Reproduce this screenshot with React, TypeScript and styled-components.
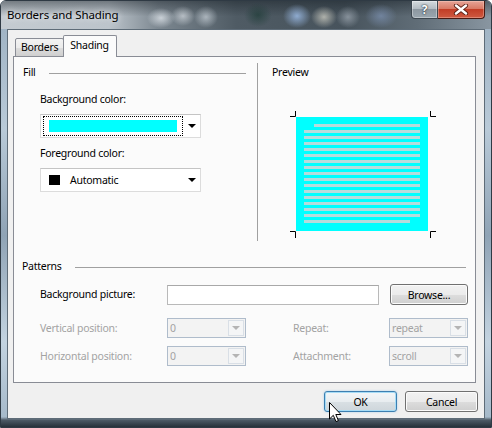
import React from "react";
import styled, { createGlobalStyle } from "styled-components";

const uiFont = `"Noto Sans", "Open Sans", "DejaVu Sans", sans-serif`;

const GlobalStyle = createGlobalStyle`
  html, body {
    margin: 0;
    padding: 0;
    background: #ffffff;
  }
  body {
    font-family: ${uiFont};
    font-size: 10.5px;
    letter-spacing: -0.25px;
    color: #000000;
  }
`;

const App = () => {
  return (
    <>
      <GlobalStyle />
      <Window>
        <TitleBar>
          <Title>Borders and Shading</Title>
          <CaptionButtons>
            <HelpButton>?</HelpButton>
            <CloseButton>
              <svg width="16" height="11" viewBox="0 0 16 11">
                <path
                  d="M3 1.5 L13 9.5 M13 1.5 L3 9.5"
                  stroke="#5a1f14"
                  strokeWidth="4.2"
                  strokeLinecap="round"
                />
                <path
                  d="M3 1.5 L13 9.5 M13 1.5 L3 9.5"
                  stroke="#ffffff"
                  strokeWidth="2.4"
                  strokeLinecap="round"
                />
              </svg>
            </CloseButton>
          </CaptionButtons>
        </TitleBar>

        <Client>
          <TabStrip>
            <Tab>Borders</Tab>
            <Tab $active>Shading</Tab>
          </TabStrip>

          <Panel>
            <TopSection>
              <FillColumn>
                <GroupHeading $indent={9} $end={11}>
                  <span>Fill</span>
                  <HeadingLine />
                </GroupHeading>
                <Field>
                  <FieldLabel $top={12}>Background color:</FieldLabel>
                  <ColorCombo>
                    <FocusRect $focused>
                      <Swatch $color="#00ffff" $w={128} $h={12} />
                    </FocusRect>
                    <DropArrow />
                  </ColorCombo>
                  <FieldLabel $top={8}>Foreground color:</FieldLabel>
                  <ColorCombo>
                    <FocusRect>
                      <Swatch $color="#000000" $w={11} $h={10} />
                      <ComboText>Automatic</ComboText>
                    </FocusRect>
                    <DropArrow />
                  </ColorCombo>
                </Field>
              </FillColumn>

              <Separator />

              <PreviewColumn>
                <HeadingText>Preview</HeadingText>
                <PreviewArt>
                  <svg width="146" height="127" viewBox="0 0 146 127">
                    <rect x="6" y="6" width="132" height="114" fill="#00ffff" />
                    {Array.from({ length: 17 }).map((_, i) => {
                      const first = i === 0;
                      const last = i === 16;
                      return (
                        <rect
                          key={i}
                          x={first ? 24 : 14}
                          y={13 + i * 6}
                          width={first || last ? 106 : 116}
                          height={3}
                          fill="#b6dcdc"
                        />
                      );
                    })}
                    <path
                      d="M0 5.5 H5.5 V0 M140.5 0 V5.5 H146 M0 120.5 H5.5 V127 M146 120.5 H140.5 V127"
                      stroke="#000"
                      strokeWidth="1"
                      fill="none"
                    />
                  </svg>
                </PreviewArt>
              </PreviewColumn>
            </TopSection>

            <PatternsSection>
              <GroupHeading $indent={8} $end={9}>
                <span>Patterns</span>
                <HeadingLine />
              </GroupHeading>

              <PatternRow $top={10}>
                <FieldLabel>Background picture:</FieldLabel>
                <TextBox />
                <BrowseCell>
                  <Button $w={78}>Browse...</Button>
                </BrowseCell>
              </PatternRow>

              <PatternRow $top={13}>
                <FieldLabel $disabled>Vertical position:</FieldLabel>
                <DisabledCombo>
                  <ComboValue>0</ComboValue>
                  <ComboButton>
                    <DropArrow $disabled />
                  </ComboButton>
                </DisabledCombo>
                <span />
                <FieldLabel $disabled>Repeat:</FieldLabel>
                <DisabledCombo>
                  <ComboValue>repeat</ComboValue>
                  <ComboButton>
                    <DropArrow $disabled />
                  </ComboButton>
                </DisabledCombo>
              </PatternRow>

              <PatternRow $top={8}>
                <FieldLabel $disabled>Horizontal position:</FieldLabel>
                <DisabledCombo>
                  <ComboValue>0</ComboValue>
                  <ComboButton>
                    <DropArrow $disabled />
                  </ComboButton>
                </DisabledCombo>
                <span />
                <FieldLabel $disabled>Attachment:</FieldLabel>
                <DisabledCombo>
                  <ComboValue>scroll</ComboValue>
                  <ComboButton>
                    <DropArrow $disabled />
                  </ComboButton>
                </DisabledCombo>
              </PatternRow>
            </PatternsSection>
          </Panel>

          <ButtonRow>
            <Button $w={73} $primary>
              OK
            </Button>
            <Button $w={73}>Cancel</Button>
          </ButtonRow>
        </Client>

        <Cursor>
          <svg width="13" height="21" viewBox="0 0 13 21">
            <path
              d="M0.5 0.5 L0.5 17 L4.3 13.3 L7 19.6 L9.4 18.6 L6.8 12.5 L12 12.5 Z"
              fill="#ffffff"
              stroke="#000000"
              strokeWidth="1"
              strokeLinejoin="round"
            />
          </svg>
        </Cursor>
      </Window>
    </>
  );
};

export default App;

const Window = styled.div`
  position: relative;
  width: 492px;
  height: 428px;
  box-sizing: border-box;
  display: flex;
  flex-direction: column;
  padding: 0 6px 8px 6px;
  border: 1px solid #2f3a44;
  border-radius: 6px 6px 0 0;
  background: linear-gradient(0deg, #27313a 0px, #4d5a66 7px, rgba(0, 0, 0, 0) 10px),
    linear-gradient(
      180deg,
      #9aaebf 0%,
      #b9cad8 30%,
      #8fa3b5 55%,
      #c3d3e0 80%,
      #a2b6c7 100%
    );
  overflow: hidden;
`;

const TitleBar = styled.div`
  height: 28px;
  margin: 0 -6px;
  padding: 0 6px;
  display: flex;
  align-items: flex-start;
  background: radial-gradient(ellipse 14px 10px at 160px 17px, rgba(235, 240, 245, 0.7), transparent),
    radial-gradient(ellipse 12px 10px at 182px 15px, rgba(230, 235, 240, 0.6), transparent),
    radial-gradient(ellipse 12px 11px at 205px 16px, rgba(220, 228, 235, 0.6), transparent),
    radial-gradient(ellipse 14px 12px at 257px 14px, rgba(30, 60, 55, 0.7), transparent),
    radial-gradient(ellipse 14px 12px at 296px 15px, rgba(150, 180, 220, 0.9), transparent),
    radial-gradient(ellipse 13px 11px at 323px 16px, rgba(200, 200, 190, 0.8), transparent),
    radial-gradient(ellipse 12px 11px at 347px 16px, rgba(150, 160, 170, 0.8), transparent),
    radial-gradient(ellipse 16px 12px at 380px 15px, rgba(120, 140, 170, 0.8), transparent),
    linear-gradient(180deg, rgba(20, 28, 34, 0.45) 0%, rgba(0, 0, 0, 0) 55%),
    linear-gradient(
      90deg,
      #c4cbd1 0%,
      #bcc4cb 22%,
      #7d8891 32%,
      #4f5b64 48%,
      #47535c 70%,
      #606d77 85%,
      #8996a1 100%
    );
`;

const Title = styled.div`
  padding-top: 6px;
  line-height: 16px;
  font-size: 11.5px;
  letter-spacing: -0.1px;
  text-shadow: 0 0 6px rgba(255, 255, 255, 0.9);
`;

const CaptionButtons = styled.div`
  display: flex;
  margin-left: auto;
`;

const HelpButton = styled.div`
  width: 27px;
  height: 18px;
  box-sizing: border-box;
  border: 1px solid #3d4750;
  border-top: none;
  border-radius: 0 0 0 4px;
  background: linear-gradient(
    180deg,
    #d4dade 0%,
    #b3bcc3 45%,
    #8d98a1 50%,
    #9aa6af 100%
  );
  box-shadow: inset 0 0 0 1px rgba(255, 255, 255, 0.35);
  color: #ffffff;
  font-weight: 700;
  font-size: 12px;
  line-height: 17px;
  text-align: center;
  text-shadow: 0 0 2px #1f2a33, 0 0 1px #1f2a33;
`;

const CloseButton = styled.div`
  width: 47px;
  height: 18px;
  box-sizing: border-box;
  border: 1px solid #4a1a12;
  border-left: none;
  border-top: none;
  border-radius: 0 0 4px 0;
  background: linear-gradient(
    180deg,
    #e6a497 0%,
    #d87a66 45%,
    #c23d26 50%,
    #cf5a41 100%
  );
  box-shadow: inset 0 0 0 1px rgba(255, 220, 210, 0.35);
  display: flex;
  align-items: center;
  justify-content: center;
`;

const Client = styled.div`
  flex: 1;
  box-sizing: border-box;
  border: 1px solid #5e6c78;
  background: #f0f0f0;
  padding: 6px 6px 0 5px;
  display: flex;
  flex-direction: column;
`;

const TabStrip = styled.div`
  display: flex;
  align-items: flex-end;
  height: 21px;
  margin-left: 2px;
  margin-bottom: -1px;
  position: relative;
  z-index: 1;
`;

const Tab = styled.div<{ $active?: boolean }>`
  box-sizing: border-box;
  height: ${(p) => (p.$active ? "22px" : "19px")};
  padding: ${(p) => (p.$active ? "2px 7px 0 6px" : "1px 5px 0 5px")};
  margin-right: ${(p) => (p.$active ? "0" : "-1px")};
  border: 1px solid #898c95;
  border-bottom: ${(p) => (p.$active ? "none" : "1px solid #898c95")};
  border-radius: 2px 2px 0 0;
  background: ${(p) =>
    p.$active
      ? "#fbfbfb"
      : "linear-gradient(180deg, #f3f3f3 0%, #ebebeb 50%, #dddddd 51%, #cfcfcf 100%)"};
  line-height: 15px;
`;

const Panel = styled.div`
  width: 463px;
  height: 327px;
  box-sizing: border-box;
  border: 1px solid #898c95;
  background: #fbfbfb;
  display: flex;
  flex-direction: column;
`;

const TopSection = styled.div`
  display: grid;
  grid-template-columns: 243px 1px 1fr;
  height: 184px;
`;

const FillColumn = styled.div`
  padding-top: 8px;
`;

const Separator = styled.div`
  background: #a0a0a0;
  margin-top: 6px;
`;

const PreviewColumn = styled.div`
  padding-top: 8px;
  padding-left: 14px;
`;

const HeadingText = styled.div`
  line-height: 15px;
`;

const GroupHeading = styled.div<{ $indent: number; $end: number }>`
  display: flex;
  align-items: center;
  gap: 13px;
  height: 15px;
  line-height: 15px;
  padding-left: ${(p) => p.$indent}px;
  padding-right: ${(p) => p.$end}px;
`;

const HeadingLine = styled.div`
  flex: 1;
  height: 1px;
  margin-top: 1px;
  background: #a0a0a0;
`;

const Field = styled.div`
  padding-left: 26px;
`;

const FieldLabel = styled.div<{ $top?: number; $disabled?: boolean }>`
  line-height: 15px;
  margin-top: ${(p) => p.$top ?? 0}px;
  color: ${(p) => (p.$disabled ? "#a3a3a3" : "#000000")};
  white-space: nowrap;
`;

const ColorCombo = styled.div`
  width: 161px;
  height: 24px;
  margin-top: 7px;
  box-sizing: border-box;
  border: 1px solid #dcdcdc;
  border-top-color: #c4c4c4;
  background: #ffffff;
  display: flex;
  align-items: center;
  padding: 0 4px 0 2px;
`;

const FocusRect = styled.div<{ $focused?: boolean }>`
  width: 140px;
  height: 20px;
  box-sizing: border-box;
  border: 1px dotted ${(p) => (p.$focused ? "#000000" : "transparent")};
  display: flex;
  align-items: center;
  padding-left: 5px;
`;

const Swatch = styled.div<{ $color: string; $w: number; $h: number }>`
  width: ${(p) => p.$w}px;
  height: ${(p) => p.$h}px;
  background: ${(p) => p.$color};
  flex-shrink: 0;
`;

const ComboText = styled.span`
  margin-left: 10px;
  line-height: 15px;
`;

const DropArrow = styled.div<{ $disabled?: boolean }>`
  margin-left: auto;
  width: 0;
  height: 0;
  border-left: 4px solid transparent;
  border-right: 4px solid transparent;
  border-top: 4px solid ${(p) => (p.$disabled ? "#b4b4b4" : "#000000")};
  margin-right: ${(p) => (p.$disabled ? "auto" : "0")};
`;

const PreviewArt = styled.div`
  margin-top: 31px;
  margin-left: 18px;
  line-height: 0;
`;

const PatternsSection = styled.div`
  margin-top: 18px;
`;

const PatternRow = styled.div<{ $top: number }>`
  display: grid;
  grid-template-columns: 127px 79px 47px 96px 79px;
  align-items: center;
  padding-left: 26px;
  margin-top: ${(p) => p.$top}px;
`;

const TextBox = styled.div`
  grid-column: 2 / span 3;
  width: 212px;
  height: 20px;
  box-sizing: border-box;
  border: 1px solid #b9b9b9;
  border-top-color: #a8a8a8;
  background: #ffffff;
`;

const BrowseCell = styled.div`
  padding-left: 1px;
`;

const Button = styled.button<{ $w: number; $primary?: boolean }>`
  width: ${(p) => p.$w}px;
  height: 21px;
  box-sizing: border-box;
  padding: 0;
  font-family: ${uiFont};
  font-size: 10.5px;
  letter-spacing: -0.25px;
  color: #000000;
  border-radius: 3px;
  border: 1px solid ${(p) => (p.$primary ? "#3c7fb1" : "#707070")};
  background: ${(p) =>
    p.$primary
      ? "linear-gradient(180deg, #f3f6f8 0%, #e8edf0 50%, #d9e0e4 51%, #ced6db 100%)"
      : "linear-gradient(180deg, #f2f2f2 0%, #ebebeb 50%, #dddddd 51%, #cfcfcf 100%)"};
  box-shadow: ${(p) =>
    p.$primary
      ? "inset 0 0 0 1px #a6dcf6, 0 0 2px rgba(80, 170, 230, 0.5)"
      : "inset 0 0 0 1px #fbfbfb"};
`;

const DisabledCombo = styled.div`
  width: 79px;
  height: 20px;
  box-sizing: border-box;
  border: 1px solid #afbccb;
  background: #f3f3f3;
  display: flex;
`;

const ComboValue = styled.div`
  flex: 1;
  padding-left: 2px;
  line-height: 18px;
  color: #a3a3a3;
`;

const ComboButton = styled.div`
  width: 16px;
  box-sizing: border-box;
  border: 1px solid #d9dfe6;
  margin: 1px;
  background: #f4f5f6;
  display: flex;
  align-items: center;
`;

const ButtonRow = styled.div`
  display: flex;
  justify-content: flex-end;
  gap: 8px;
  margin-top: 8px;
`;

const Cursor = styled.div`
  position: absolute;
  left: 328px;
  top: 401px;
  line-height: 0;
`;
